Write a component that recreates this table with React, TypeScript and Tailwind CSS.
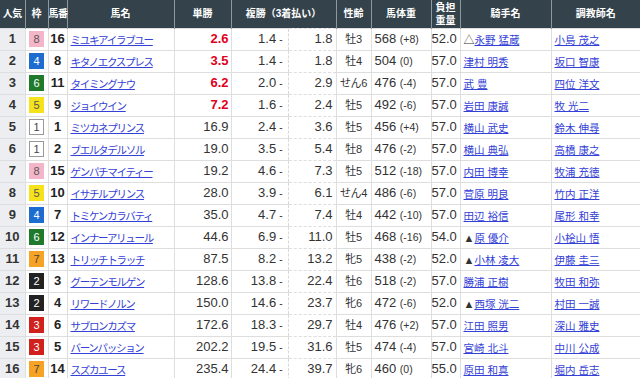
import React from 'react';

type Row = [number, number, number, string, string, string, string, string, string, string, string, string];

const rows: Row[] = [
  [1, 8, 16, 'ミユキアイラブユー', '2.6', '1.4', '1.8', '牡3', '568 (+8)', '52.0', '△永野 猛蔵', '小島 茂之'],
  [2, 4, 8, 'キタノエクスプレス', '3.5', '1.4', '1.8', '牡4', '504 (0)', '57.0', '津村 明秀', '坂口 智康'],
  [3, 6, 11, 'タイミングナウ', '6.2', '2.0', '2.9', 'せん6', '476 (-4)', '57.0', '武 豊', '四位 洋文'],
  [4, 5, 9, 'ジョイウイン', '7.2', '1.6', '2.4', '牡5', '492 (-6)', '57.0', '岩田 康誠', '牧 光二'],
  [5, 1, 1, 'ミツカネプリンス', '16.9', '2.4', '3.6', '牡5', '456 (+4)', '57.0', '横山 武史', '鈴木 伸尋'],
  [6, 1, 2, 'ブエルタデルソル', '19.0', '3.5', '5.4', '牡8', '476 (-2)', '57.0', '横山 典弘', '高橋 康之'],
  [7, 8, 15, 'ゲンパチマイティー', '19.2', '4.6', '7.3', '牡5', '512 (-18)', '57.0', '内田 博幸', '牧浦 充徳'],
  [8, 5, 10, 'イサチルプリンス', '28.0', '3.9', '6.1', 'せん4', '486 (-6)', '57.0', '菅原 明良', '竹内 正洋'],
  [9, 4, 7, 'トミケンカラバティ', '35.0', '4.7', '7.4', '牡4', '442 (-10)', '57.0', '田辺 裕信', '尾形 和幸'],
  [10, 6, 12, 'インナーアリュール', '44.6', '6.9', '11.0', '牡5', '468 (-16)', '54.0', '▲原 優介', '小桧山 悟'],
  [11, 7, 13, 'トリッチトラッチ', '87.5', '8.2', '13.2', '牝5', '438 (-2)', '52.0', '▲小林 凌大', '伊藤 圭三'],
  [12, 2, 3, 'グーテンモルゲン', '128.6', '13.8', '22.4', '牡6', '518 (-2)', '57.0', '勝浦 正樹', '牧田 和弥'],
  [13, 2, 4, 'リワードノルン', '150.0', '14.6', '23.7', '牝6', '472 (-6)', '52.0', '▲西塚 洸二', '村田 一誠'],
  [14, 3, 6, 'サブロンカズマ', '172.6', '18.3', '29.7', '牡4', '476 (+2)', '57.0', '江田 照男', '深山 雅史'],
  [15, 3, 5, 'バーンパッション', '202.2', '19.5', '31.6', '牡5', '474 (-4)', '57.0', '宮崎 北斗', '中川 公成'],
  [16, 7, 14, 'スズカユース', '235.4', '24.4', '39.7', '牝6', '460 (0)', '55.0', '原田 和真', '堀内 岳志'],
];

const waku: Record<number, string> = {
  1: 'bg-white text-[#444] border border-[#999]',
  2: 'bg-[#222] text-white',
  3: 'bg-[#d0211c] text-white',
  4: 'bg-[#1d6cd0] text-white',
  5: 'bg-[#f5e21a] text-[#555]',
  6: 'bg-[#1f7a2c] text-white',
  7: 'bg-[#f6a225] text-[#444]',
  8: 'bg-[#f5b5c8] text-[#555]',
};

const th = 'bg-[#34434b] text-white font-bold text-[10px] border-x border-[#8d979c] align-middle text-center leading-[12px] whitespace-nowrap p-0';
const td = 'border border-[#dedede] h-[22px] p-0 align-middle leading-[14px]';

function Jockey({ name }: { name: string }) {
  const mark = name[0] === '△' || name[0] === '▲' ? name[0] : '';
  const rest = mark ? name.slice(1) : name;
  return (
    <span className="text-[10.5px]">
      {mark && <span className="text-[#333] text-[11px]">{mark}</span>}
      <a href="#" className="text-[#3441d6] underline">{rest}</a>
    </span>
  );
}

export default function App() {
  return (
    <div className="w-[640px] h-[378px] overflow-hidden bg-white" style={{ fontFamily: '"Liberation Sans", "Noto Sans CJK JP", sans-serif' }}>
      <table className="w-[640px] table-fixed border-collapse text-[#333]">
        <colgroup>
          <col className="w-[25px]" />
          <col className="w-[23px]" />
          <col className="w-[19px]" />
          <col className="w-[107px]" />
          <col className="w-[57px]" />
          <col className="w-[57px]" />
          <col className="w-[48px]" />
          <col className="w-[35px]" />
          <col className="w-[60px]" />
          <col className="w-[29px]" />
          <col className="w-[91px]" />
          <col className="w-[89px]" />
        </colgroup>
        <thead>
          <tr>
            <th className={th + ' h-[28px] border-l-0 tracking-[-0.5px]'}>人気</th>
            <th className={th}>枠</th>
            <th className={th + ' text-[9px] tracking-[-0.5px]'}>馬番</th>
            <th className={th}>馬名</th>
            <th className={th}>単勝</th>
            <th className={th} colSpan={2}>複勝（3着払い）</th>
            <th className={th}>性齢</th>
            <th className={th}>馬体重</th>
            <th className={th + ' text-[9.5px] leading-[13px]'}>負担<br />重量</th>
            <th className={th}>騎手名</th>
            <th className={th + ' border-r-0'}>調教師名</th>
          </tr>
        </thead>
        <tbody>
          {rows.map((r) => {
            const [w, kg] = r[8].split(' ');
            return (
              <tr key={r[0]}>
                <td className={td + ' border-l-0 bg-[#eceef1] text-center text-[13px] font-semibold text-[#333]'}>{r[0]}</td>
                <td className={td}>
                  <div className="flex justify-center">
                    <span className={'flex items-center justify-center w-[15px] h-[16px] text-[11px] leading-none ' + waku[r[1]]}>{r[1]}</span>
                  </div>
                </td>
                <td className={td + ' text-center text-[13px] font-bold text-[#222]'}>{r[2]}</td>
                <td className={td + ' pl-[3px]'}>
                  <a href="#" className="text-[#3441d6] underline text-[10.5px] tracking-[-1.3px] whitespace-nowrap">{r[3]}</a>
                </td>
                <td className={td + ' text-right pr-[2px] text-[13px] ' + (r[0] <= 4 ? 'text-[#e0001b] font-bold' : '')}>{r[4]}</td>
                <td className={td + ' border-r-0 text-right pr-[5px] text-[13px]'}>
                  {r[5]}<span className="text-[10px] ml-[3px]">-</span>
                </td>
                <td className={td + ' border-l border-l-[#d9d9d9] border-dashed text-right pr-[3px] text-[13px]'}>{r[6]}</td>
                <td className={td + ' text-center text-[11px] tracking-[-0.3px] whitespace-nowrap'}>{r[7]}</td>
                <td className={td + ' pl-[3px] text-[13px] whitespace-nowrap'}>
                  {w} <span className="text-[10.5px]">{kg}</span>
                </td>
                <td className={td + ' text-right pr-[3px] text-[13px]'}>{r[9]}</td>
                <td className={td + ' pl-[3px] whitespace-nowrap'}><Jockey name={r[10]} /></td>
                <td className={td + ' border-r-0 pl-[3px] whitespace-nowrap'}><Jockey name={r[11]} /></td>
              </tr>
            );
          })}
        </tbody>
      </table>
    </div>
  );
}
